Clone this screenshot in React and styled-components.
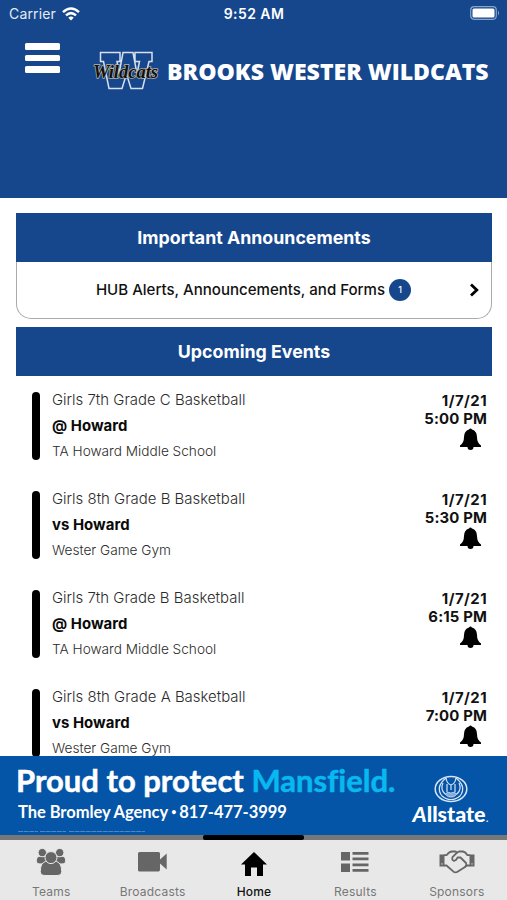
import React from "react";
import styled, { createGlobalStyle } from "styled-components";

const BLUE = "#16478d";

const GlobalStyle = createGlobalStyle`
  * { box-sizing: border-box; }
  body { margin: 0; background: #fff; font-family: Inter, "Liberation Sans", sans-serif; }
`;

const Screen = styled.div`
  width: 507px;
  height: 900px;
  display: flex;
  flex-direction: column;
  overflow: hidden;
  background: #fff;
`;

const Header = styled.header`
  flex: none;
  height: 198px;
  background: ${BLUE};
  color: #fff;
`;

const StatusBar = styled.div`
  height: 27px;
  display: grid;
  grid-template-columns: 1fr auto 1fr;
  align-items: center;
  padding: 0 7px 0 9px;
`;

const Carrier = styled.div`
  display: flex;
  align-items: center;
  gap: 6px;
  font-size: 14px;
  letter-spacing: 0.15px;
  color: #e4ebf5;
`;

const Clock = styled.div`
  font-size: 14px;
  font-weight: 600;
  letter-spacing: 0.45px;
  margin-left: -1px;
`;

const Battery = styled.svg`
  justify-self: end;
  margin-top: -1px;
`;

const TitleRow = styled.div`
  display: flex;
  align-items: flex-start;
  padding: 16px 0 0 25px;
`;

const MenuButton = styled.button`
  display: flex;
  flex-direction: column;
  gap: 5px;
  width: 35px;
  padding: 0;
  border: 0;
  background: none;
`;

const MenuBar = styled.span`
  height: 6.7px;
  border-radius: 1.5px;
  background: #fff;
`;

const TeamLogo = styled.svg`
  flex: none;
  margin: 6px 0 0 31px;
`;

const TeamName = styled.h1`
  margin: 12px 0 0 2px;
  font: 800 23.05px/32px "Open Sans", sans-serif;
  white-space: nowrap;
`;

const Content = styled.main`
  flex: none;
  height: 558px;
  padding: 15px 15px 0 16px;
  overflow: hidden;
`;

const SectionTitle = styled.h2`
  display: flex;
  align-items: center;
  justify-content: center;
  height: 49px;
  margin: 0;
  background: ${BLUE};
  color: #fff;
  font-size: 17.8px;
  font-weight: 650;
`;

const AnnouncementCard = styled.div`
  display: grid;
  grid-template-columns: 24px 1fr 24px;
  align-items: center;
  height: 57px;
  margin-bottom: 7.5px;
  padding-bottom: 1px;
  border: 1.5px solid #aaa;
  border-top: 0;
  border-radius: 0 0 15px 15px;
`;

const AnnouncementLabel = styled.div`
  grid-column: 2;
  display: flex;
  align-items: center;
  justify-content: center;
  gap: 4px;
  margin-left: -1px;
  font-size: 15.05px;
  font-weight: 500;
  color: #111;
`;

const CountBadge = styled.span`
  display: grid;
  place-items: center;
  width: 22px;
  height: 22px;
  border-radius: 50%;
  background: ${BLUE};
  color: #fff;
  font-size: 9px;
`;

const EventList = styled.div`
  display: flex;
  flex-direction: column;
  gap: 31px;
  padding: 16.5px 5px 0 16px;
`;

const EventRow = styled.article`
  display: flex;
  height: 68px;
`;

const EventBar = styled.div`
  width: 8px;
  height: 68px;
  margin-right: 12px;
  border-radius: 4px;
  background: #000;
`;

const EventInfo = styled.div`
  flex: 1;
  margin-top: -5px;
  color: #2b2b2b;
`;

const Sport = styled.div`
  font-size: 14.95px;
  font-weight: 320;
  line-height: 26px;
`;

const Opponent = styled.div`
  font-size: 14.9px;
  font-weight: 700;
  line-height: 26px;
  letter-spacing: 0.05px;
  color: #0a0a0a;
`;

const Place = styled.div`
  font-size: 13.65px;
  font-weight: 320;
  line-height: 25px;
`;

const EventTime = styled.div`
  display: flex;
  flex-direction: column;
  align-items: flex-end;
  font-size: 14.9px;
  font-weight: 650;
  line-height: 18px;
  color: #111;
`;

const EventDate = styled.span`
  letter-spacing: 0.45px;
`;

const EventHour = styled.span`
  letter-spacing: 0.15px;
`;

const BellIcon = styled.svg`
  margin: 0 6px 0 0;
`;

const Ad = styled.aside`
  flex: none;
  display: flex;
  justify-content: space-between;
  height: 79px;
  padding: 0 17px 0 16px;
  background: #0454a8;
  color: #fff;
  font-family: Lato, sans-serif;
  white-space: nowrap;
`;

const AdHeadline = styled.div`
  margin-top: 4px;
  font-size: 31px;
  font-weight: 700;
  line-height: 40px;
  -webkit-text-stroke: 0.5px currentColor;
  font-variant-ligatures: none;
`;

const Accent = styled.span`
  color: #08b9ef;
`;

const AdContact = styled.div`
  display: flex;
  align-items: center;
  gap: 3px;
  margin: 0 0 0 2px;
  font-size: 16.5px;
  font-weight: 700;
  line-height: 24px;
  letter-spacing: -0.05px;
`;

const Bullet = styled.span`
  font-size: 9px;
`;

const FinePrint = styled.svg`
  display: block;
  margin: 6px 0 0 2px;
`;

const Sponsor = styled.div`
  display: flex;
  flex-direction: column;
  align-items: center;
  width: 79px;
  padding-top: 19px;
`;

const SponsorName = styled.div`
  margin-top: -1px;
  font: 900 21.5px/24px Lato, sans-serif;
`;

const Slant = styled.span`
  font-style: italic;
`;

const SmallDot = styled.span`
  font-size: 12px;
  font-weight: 400;
`;

const Indicator = styled.div`
  flex: none;
  height: 5px;
  display: flex;
  justify-content: center;
  background: #777;
`;

const IndicatorThumb = styled.div`
  width: 101px;
  border-radius: 2px;
  background: #000;
`;

const TabBar = styled.nav`
  flex: 1;
  display: grid;
  grid-template-columns: repeat(5, 1fr);
  background: #e8e8e8;
`;

const Tab = styled.a`
  display: flex;
  flex-direction: column;
  align-items: center;
  color: ${(p) => (p.$active ? "#000" : "#666")};
`;

const TabIcon = styled.div`
  display: flex;
  align-items: center;
  height: ${(p) => (p.$active ? 47 : 43)}px;
  margin-bottom: ${(p) => (p.$active ? -4 : 0)}px;
  padding-left: 1px;
`;

const TabLabel = styled.span`
  margin-left: 1px;
  font-size: 12px;
  line-height: 18px;
  letter-spacing: 0.2px;
  color: ${(p) => (p.$active ? "#111" : "#777")};
  font-weight: ${(p) => (p.$active ? 500 : 400)};
`;

const events = [
  ["Girls 7th Grade C Basketball", "@ Howard", "TA Howard Middle School", "5:00 PM"],
  ["Girls 8th Grade B Basketball", "vs Howard", "Wester Game Gym", "5:30 PM"],
  ["Girls 7th Grade B Basketball", "@ Howard", "TA Howard Middle School", "6:15 PM"],
  ["Girls 8th Grade A Basketball", "vs Howard", "Wester Game Gym", "7:00 PM"],
];

const TeamsIcon = () => (
  <svg width="30" height="28" viewBox="0 0 30 28" fill="currentColor" stroke="#e8e8e8" strokeWidth="1">
    <path d="M3.500 8.400h6l2.500 7.500H3Q.3 16 .3 12.800Q.5 8.400 3.500 8.400Z" />
    <path d="M26.500 8.400h-6l-2.500 7.500H27Q29.700 16 29.700 12.800Q29.500 8.400 26.500 8.400Z" />
    <circle cx="6.300" cy="4.600" r="4.200" />
    <circle cx="23.700" cy="4.600" r="4.200" />
    <path d="M9.500 13.500h11Q25.700 15 25.700 23.500Q25.500 27.500 21 27.500H9Q4.500 27.500 4.300 23.500Q4.300 15 9.500 13.500Z" />
    <circle cx="15" cy="9.600" r="6" />
  </svg>
);

const VideoIcon = () => (
  <svg width="29" height="20" viewBox="0 0 29 20" fill="currentColor">
    <path d="M1.500 0H20.500Q22 0 22 1.500V7.500L28.700 1.500V17.500L22 11.500V17.500Q22 19.500 20.500 19.500H1.500Q0 19.500 0 18V1.500Q0 0 1.500 0Z" />
  </svg>
);

const HomeIcon = () => (
  <svg width="26" height="24" viewBox="0 0 26 24" fill="currentColor">
    <path d="M13 0L26 12.500H22V24H16V15.500H10V24H4V12.500H0Z" />
  </svg>
);

const ResultsIcon = () => (
  <svg width="28" height="20" viewBox="0 0 28 20" fill="currentColor">
    <path d="M0 0h9v8.500H0zM0 11.500h9V20H0zM11.500 0H27.500v2.800H11.500zM11.500 5.500H27.500v2.800H11.500zM11.500 11.500H27.500v2.800H11.500zM11.500 17H27.500v2.800H11.500z" />
  </svg>
);

const HandshakeIcon = () => (
  <svg width="36" height="24" viewBox="0 0 36 24" fill="none" stroke="currentColor" strokeWidth="1.800" strokeLinejoin="round" strokeLinecap="round">
    <path d="M.5 4.500H5.500V16.500H.5ZM30.500 4.500H35.500V16.500H30.500Z" fill="currentColor" stroke="none" />
    <path d="M3 13.800v.1M33 13.800v.1" stroke="#e8e8e8" strokeWidth="1.300" />
    <path d="M5.500 5.200H7.500Q10.500 1.500 13 1.500H16.500L18 2.600L20 1.500H24Q26.500 2 28.500 5.200H30.500" />
    <path d="M5.500 15.500H7.500L14.500 21.700Q16.500 23 18.500 21.800L26 17Q27 15.500 28.500 15.500H30.500" />
    <path d="M18 2.600L13.500 7.200Q12.500 10 14.800 10.800Q17 11 18.500 7.500H21.500L27 13Q28 14.500 26.500 16.500" />
  </svg>
);

const tabs = [
  ["Teams", <TeamsIcon />],
  ["Broadcasts", <VideoIcon />],
  ["Home", <HomeIcon />],
  ["Results", <ResultsIcon />],
  ["Sponsors", <HandshakeIcon />],
];

const Wifi = () => (
  <svg width="18" height="14" viewBox="0 0 18 14" fill="none" stroke="#fff" strokeWidth="2.500">
    <path d="M1 5.200Q9-2.200 17 5.200" />
    <path d="M4 8.400Q9 3.900 14 8.400" />
    <path d="M6.300 10.700Q9 8.300 11.700 10.700L9 13.500Z" fill="#fff" stroke="none" />
  </svg>
);

const WildcatsLogo = () => (
  <TeamLogo width="74" height="44" viewBox="0 0 74 44">
    <path
      d="M9.500 3.500H29V12.500H26L28 25L32 3.500H42L46 25L48.500 12.500H44V3.500H61V12.500H58L51.500 39.500H40L35.500 25L31 39.500H18L12.500 12.500H9.500Z"
      fill={BLUE}
      stroke="#d9e0eb"
      strokeWidth="1.500"
    />
    <text
      x="2"
      y="28.500"
      textLength="65"
      lengthAdjust="spacingAndGlyphs"
      fontFamily="Liberation Serif, serif"
      fontStyle="italic"
      fontWeight="700"
      fontSize="19"
      fill="#111"
      stroke="#b9b5a9"
      strokeWidth="1.500"
      paintOrder="stroke"
    >
      Wildcats
    </text>
  </TeamLogo>
);

export default function App() {
  return (
    <Screen>
      <GlobalStyle />
      <Header>
        <StatusBar>
          <Carrier>Carrier <Wifi /></Carrier>
          <Clock>9:52 AM</Clock>
          <Battery width="30" height="14" viewBox="0 0 30 14">
            <rect x=".7" y=".7" width="25.600" height="12.600" rx="3.500" fill="none" stroke="#8ba3c6" strokeWidth="1.200" />
            <rect x="2.500" y="2.500" width="22" height="9" rx="1.500" fill="#fff" />
            <path d="M28 4.500Q30 7 28 9.500Z" fill="#8ba3c6" />
          </Battery>
        </StatusBar>
        <TitleRow>
          <MenuButton aria-label="Menu"><MenuBar /><MenuBar /><MenuBar /></MenuButton>
          <WildcatsLogo />
          <TeamName>BROOKS WESTER WILDCATS</TeamName>
        </TitleRow>
      </Header>
      <Content>
        <SectionTitle>Important Announcements</SectionTitle>
        <AnnouncementCard>
          <AnnouncementLabel>
            HUB Alerts, Announcements, and Forms
            <CountBadge>1</CountBadge>
          </AnnouncementLabel>
          <svg width="12" height="14" viewBox="0 0 12 14" fill="none" stroke="#000" strokeWidth="2.800">
            <path d="M4 1.500L9.800 7L4 12.500" />
          </svg>
        </AnnouncementCard>
        <SectionTitle>Upcoming Events</SectionTitle>
        <EventList>
          {events.map(([sport, opponent, place, time]) => (
            <EventRow key={time}>
              <EventBar />
              <EventInfo>
                <Sport>{sport}</Sport>
                <Opponent>{opponent}</Opponent>
                <Place>{place}</Place>
              </EventInfo>
              <EventTime>
                <EventDate>1/7/21</EventDate>
                <EventHour>{time}</EventHour>
                <BellIcon width="21" height="22" viewBox="0 0 21 22">
                  <path d="M9 1.500Q10.500-.5 12 1.500Q17 3 17 9Q17 15 21 17.500V19H13.500Q13.500 22 10.500 22Q7.500 22 7.500 19H0V17.500Q4 15 4 9Q4 3 9 1.500Z" />
                </BellIcon>
              </EventTime>
            </EventRow>
          ))}
        </EventList>
      </Content>
      <Ad>
        <div>
          <AdHeadline>Proud to protect <Accent>Mansfield.</Accent></AdHeadline>
          <AdContact>The Bromley Agency <Bullet>•</Bullet> 817-477-3999</AdContact>
          <FinePrint width="130" height="3" viewBox="0 0 130 3">
            <path d="M0 1.500H20M22 1.500H48M51 1.500H127" stroke="#4b87c5" strokeDasharray="5 .6" />
          </FinePrint>
        </div>
        <Sponsor>
          <svg width="34" height="28" viewBox="0 0 34 28" fill="none" stroke="#d8e6f7" strokeWidth="1.200">
            <ellipse cx="17" cy="14" rx="15.800" ry="12.500" strokeWidth="1.500" />
            <path d="M12 3Q1 12 8 21Q12 24.500 17 24.500Q22 24.500 26 21Q33 12 22 3" />
            <path d="M9 8Q6 14 11 19M25 8Q28 14 23 19M12 3Q13 9 17 10Q21 9 22 3M17 10V15M13 9V17M21 9V17" />
            <path d="M11 19Q14 16 17 18Q20 16 23 19Q20 23 17 22Q14 23 11 19Z" fill="#83acd8" strokeWidth=".7" />
          </svg>
          <SponsorName><Slant>A</Slant>llstate<SmallDot>.</SmallDot></SponsorName>
        </Sponsor>
      </Ad>
      <Indicator><IndicatorThumb /></Indicator>
      <TabBar>
        {tabs.map(([label, icon]) => (
          <Tab key={label} $active={label === "Home"}>
            <TabIcon $active={label === "Home"}>{icon}</TabIcon>
            <TabLabel $active={label === "Home"}>{label}</TabLabel>
          </Tab>
        ))}
      </TabBar>
    </Screen>
  );
}
